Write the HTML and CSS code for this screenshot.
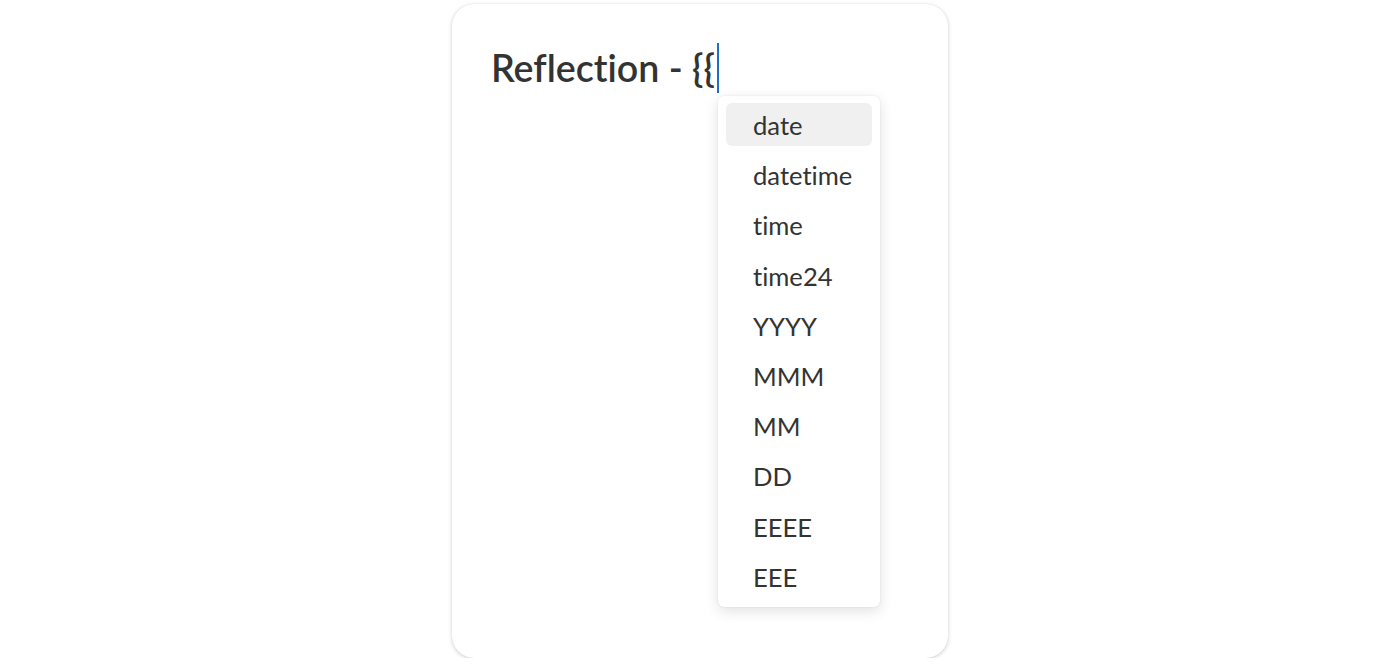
FILE: index.html
```html
<!DOCTYPE html>
<html>
<head>
<meta charset="utf-8">
<link rel="stylesheet" href="styles.css">
</head>
<body>
<div class="stage">
  <div class="card">
    <h1 class="title">Reflection - {{<span class="caret"></span></h1>
    <ul class="menu">
      <li class="item active">date</li>
      <li class="item">datetime</li>
      <li class="item">time</li>
      <li class="item">time24</li>
      <li class="item">YYYY</li>
      <li class="item">MMM</li>
      <li class="item">MM</li>
      <li class="item">DD</li>
      <li class="item">EEEE</li>
      <li class="item">EEE</li>
    </ul>
  </div>
</div>
</body>
</html>
```
FILE: styles.css
```css
html, body {
  margin: 0;
  padding: 0;
  background: #ffffff;
  font-family: Lato, "Noto Sans", sans-serif;
  font-variant-ligatures: none;
  color: #333333;
}
.stage {
  display: flex;
  justify-content: center;
  padding-top: 4px;
}
.card {
  position: relative;
  width: 496px;
  height: 654px;
  box-sizing: border-box;
  border-radius: 22px;
  background: #fff;
  box-shadow: 0 1px 4px rgba(0,0,0,0.18), 0 0 1px rgba(0,0,0,0.12);
  padding: 39px 39px;
}
.title {
  margin: 0;
  font-size: 37.6px;
  font-weight: 600;
  line-height: 48px;
  color: #333;
  display: flex;
  align-items: center;
}
.caret {
  display: inline-block;
  width: 2px;
  height: 50px;
  background: #1f6fc8;
  margin-left: 2px;
}
.menu {
  position: absolute;
  left: 266px;
  top: 92px;
  width: 162px;
  margin: 0;
  padding: 7px 8px 9px;
  box-sizing: border-box;
  list-style: none;
  background: #fff;
  border-radius: 6px;
  box-shadow: 0 4px 14px rgba(0,0,0,0.12), 0 0 2px rgba(0,0,0,0.10);
  display: flex;
  flex-direction: column;
  gap: 7.2px;
}
.item {
  height: 43px;
  line-height: 45px;
  padding-left: 27px;
  border-radius: 6px;
  font-size: 25.6px;
  color: #333;
}
.item.active {
  background: #f0f0f0;
}
```
